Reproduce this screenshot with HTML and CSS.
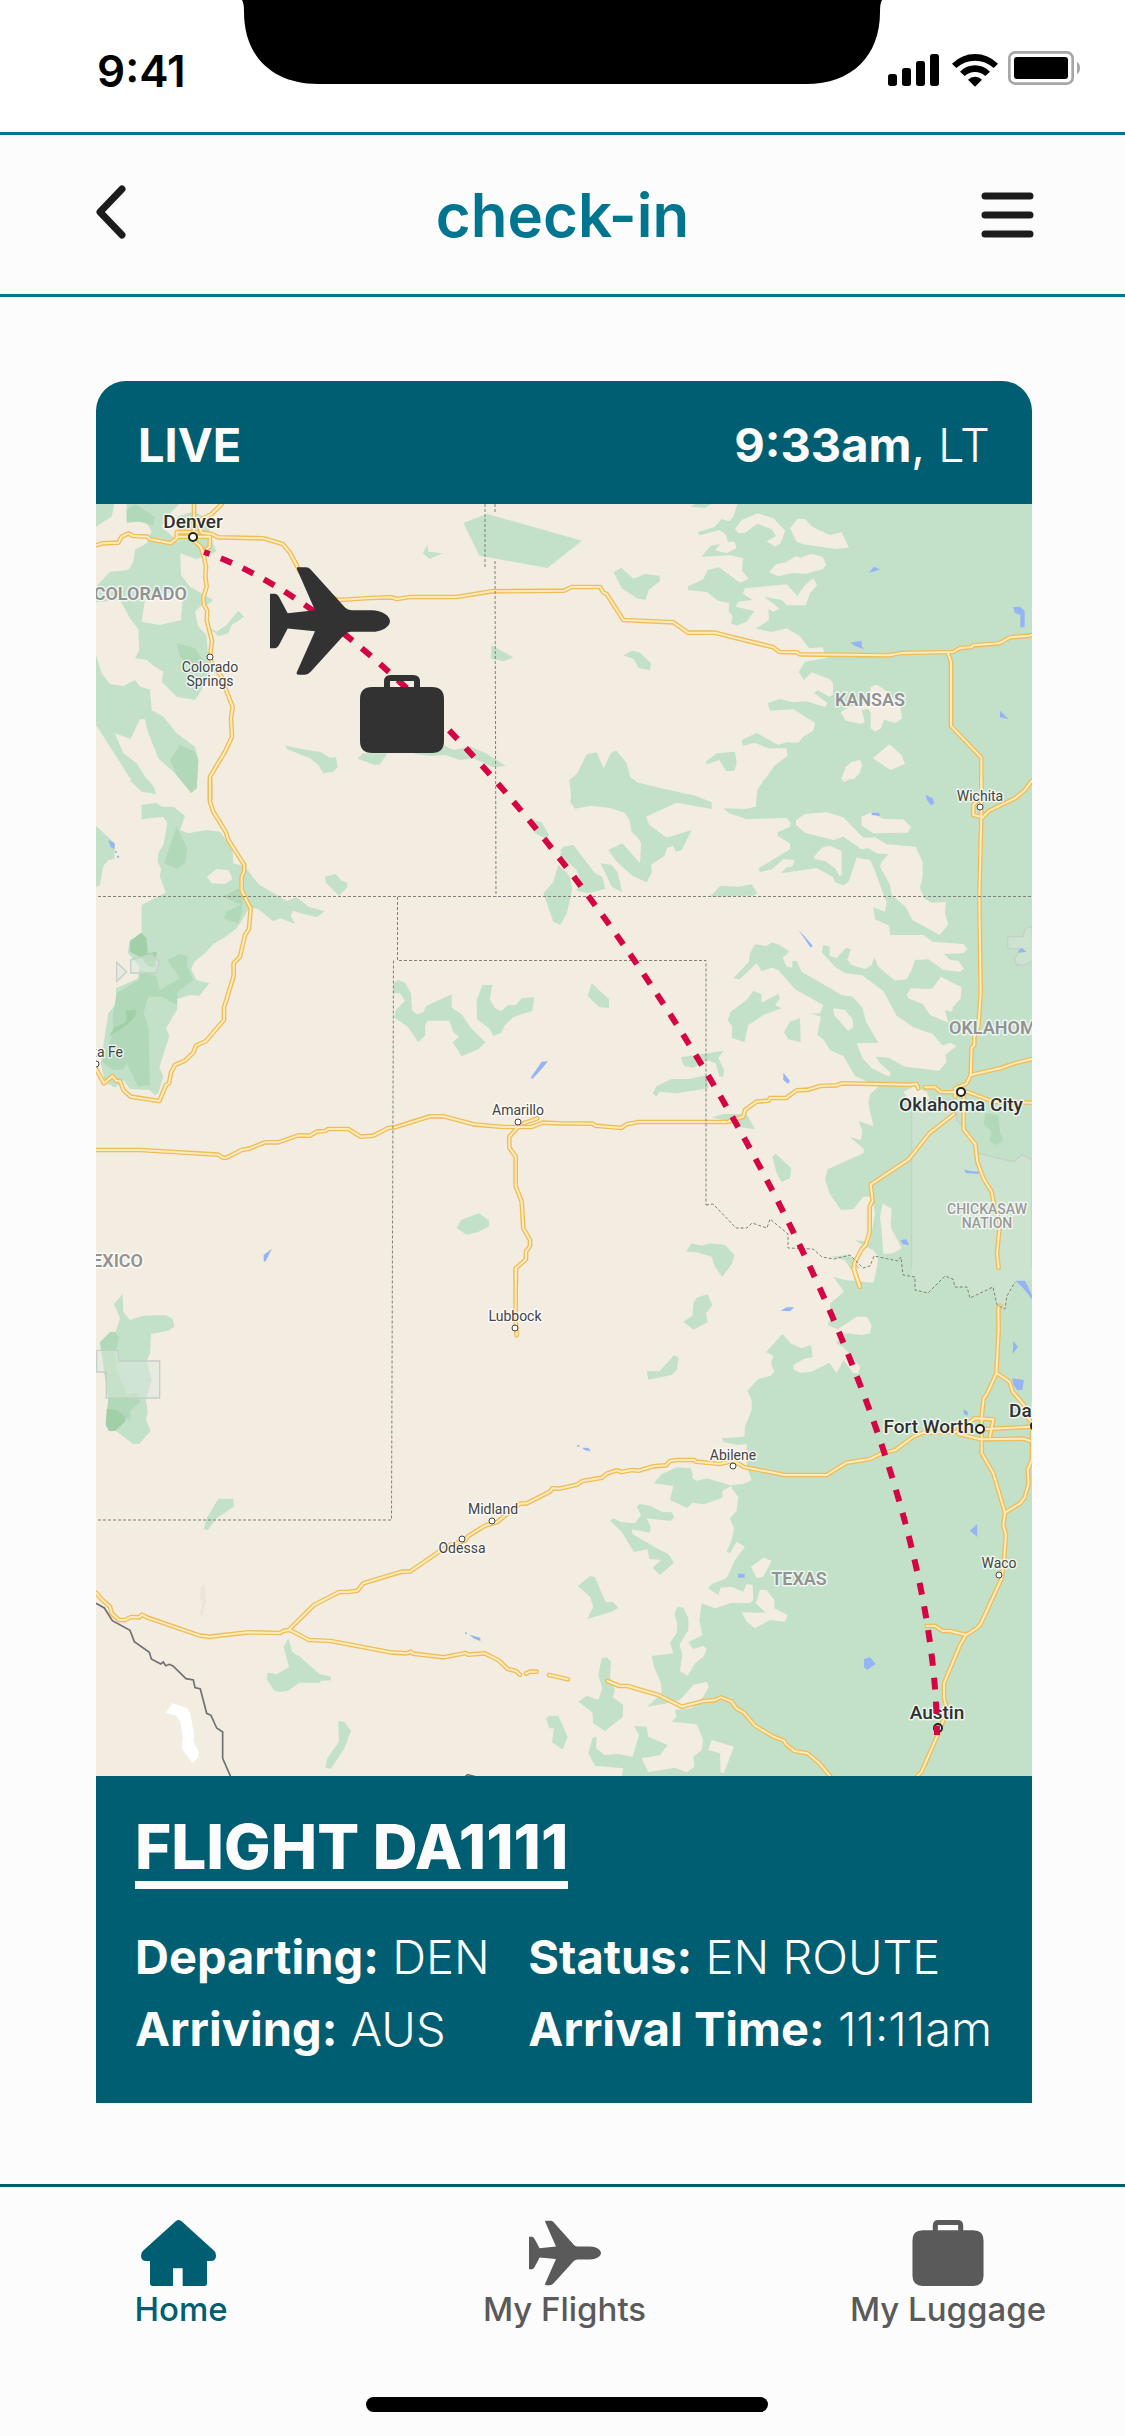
FILE: index.html
```html
<!DOCTYPE html>
<html lang="en">
<head>
<meta charset="utf-8">
<meta name="viewport" content="width=device-width, initial-scale=1">
<title>check-in</title>
<link rel="stylesheet" href="styles.css">
</head>
<body>
<svg class="sprite" aria-hidden="true">
  <symbol id="plane" viewBox="570 591 360 323">
    <path d="M651 591h27q8 0 14 7L795 712q8 8 20 8h60c30 0 55 16 55 33s-25 32-55 32h-62q-11 0-20 9L692 905q-8 9-18 9h-18q-9 0-5-9L705 783 623 775 598 823q-6 11-14 11h-14V671h14q8 0 14 11L623 729 705 720 651 597z"/>
  </symbol>
  <symbol id="suitcase" viewBox="840 915 252 234">
    <path fill-rule="evenodd" d="M876 951H912V935Q912 915 932 915H1000Q1020 915 1020 935V951H1056Q1092 951 1092 987V1113Q1092 1149 1056 1149H876Q840 1149 840 1113V987Q840 951 876 951ZM930 933V951H1002V933Z"/>
  </symbol>
</svg>

<div class="screen">
  <div class="status-bar">
    <span class="clock">9:41</span>
    <svg class="notch" viewBox="0 0 640 84" aria-hidden="true"><path d="M0 0Q2 3 2 12C2 56 30 84 76 84H564C610 84 638 56 638 12Q638 3 640 0Z"/></svg>
    <svg class="indicators" viewBox="54 33 576 108" role="img" aria-label="Signal, Wi-Fi and battery">
      <rect x="54" y="102" width="27" height="36" rx="8"/>
      <rect x="96" y="84" width="27" height="54" rx="8"/>
      <rect x="138" y="63" width="27" height="75" rx="8"/>
      <rect x="180" y="42" width="27" height="96" rx="8"/>
      <path d="M246 71Q276 42 315 42T384 71L371 84Q346 62 315 62T259 84Z"/>
      <path d="M270 95Q290 76 315 76T360 95L346 108Q332 96 315 96T284 108Z"/>
      <path d="M294 119Q303 110 315 110T336 119L315 140Z"/>
      <rect class="battery-case" x="418" y="37" width="190" height="94" rx="18"/>
      <rect x="432" y="51" width="162" height="66" rx="9"/>
      <path class="battery-cap" d="M621 66Q630 71 630 84T621 102Z"/>
    </svg>
  </div>

  <header class="app-bar">
    <button class="icon-button" type="button" aria-label="Back">
      <svg width="36" height="60" viewBox="0 0 36 60"><path class="chevron" d="M31 4 9 27 31 50"/></svg>
    </button>
    <h1 class="app-title">check-in</h1>
    <button class="icon-button icon-button-end" type="button" aria-label="Menu">
      <svg width="53" height="46" viewBox="0 0 53 46"><path class="bars" d="M4 4H49M4 23H49M4 42H49"/></svg>
    </button>
  </header>

  <main class="content">
    <article class="flight-card">
      <div class="live-bar">
        <strong>LIVE</strong>
        <span><strong>9:33am</strong><span class="comma">,</span> LT</span>
      </div>

      <svg class="map" viewBox="96 504 936 1272" role="img" aria-label="Map of the flight from Denver to Austin">
        <defs>
          <g id="roads">
            <g transform="translate(80 370) scale(.33333)">
              <path d="M342 402V490L345 515 362 530 372 560 378 590 376 620 380 650 370 683 372 705 382 722 380 750 396 812 390 862 400 890 425 920 438 960 458 1010 453 1045 456 1100 435 1145 390 1220V1290"/>
              <path d="M425 402 395 432 352 455 365 488 395 492 415 502 550 505 608 522 630 548 660 605 700 660 775 690 870 684 935 682 950 687 990 681 1130 681 1235 664 1452 662 1475 651 1560 651 1570 668 1580 672 1630 750 1780 757 1824 788 1905 788 2080 832 2098 846 2150 847 2160 853 2428 856 2465 849 2620 846 2640 834 2672 832 2680 826 2758 820 2790 802 2850 797 2870 788"/>
              <path d="M48 526 68 520 115 518 125 500 145 490 160 498 203 500 210 508 272 520 290 505 290 487 352 487M290 500H390L389 530 370 545"/>
            </g>
            <g transform="translate(560 370) scale(.33333)">
              <path d="M1163 847 1173 875V1068L1264 1163V1290"/>
            </g>
            <g transform="translate(80 780) scale(.33333)">
              <path d="M390 0V65L400 95 437 155 445 180 493 255 492 275 485 290V330L500 362 512 385 507 447 495 465 480 530 461 550V588L432 683V720L378 783 348 797 340 818 315 842 285 855 273 877 267 910 258 915 238 963 152 950 130 930 120 903 108 902 97 888 72 910 48 866"/>
              <path d="M40 1110H180L415 1124 428 1133 440 1133 485 1110 508 1106 555 1087 595 1087 655 1066 690 1067 710 1055 735 1053 745 1047H805L842 1070 880 1067 925 1044 945 1042 1050 1009 1090 1009 1180 1033 1270 1041 1355 1041 1388 1028 1440 1030 1538 1031 1546 1037 1624 1044 1640 1033 1675 1026H1942L1990 1010 1995 990 2030 965 2065 962 2070 954 2118 954 2150 931 2185 929 2220 918 2270 916 2285 910 2490 914 2510 912 2515 925"/>
              <path d="M1315 1040 1288 1070V1103L1307 1130V1218L1325 1265 1330 1345 1350 1380 1350 1398 1338 1415V1438L1308 1465V1510M1330 1030 1372 1015"/>
            </g>
            <g transform="translate(560 780) scale(.33333)">
              <path d="M1264 -5V110L1258 350 1262 640 1255 740 1243 770V795L1235 803 1232 885 1220 910 1185 925V950M1416 2 1395 30 1365 55 1288 92 1268 112 1240 105 1240 75 1260 55"/>
              <path d="M1095 922 1125 922 1142 936 1190 937M1220 935 1300 965 1416 968M1232 885 1320 865 1370 848 1416 837"/>
              <path d="M1182 1002 1108 1060 1046 1138 932 1214 938 1262 929 1280V1357L917 1395 905 1407 883 1450V1470L900 1520M1211 950V1048L1246 1093 1252 1145 1270 1195 1295 1235 1302 1275 1320 1330 1311 1420 1316 1463"/>
            </g>
            <g transform="translate(80 1270) scale(.33333)">
              <path d="M1307 -5V150L1310 196"/>
              <path d="M628 1078 702 1005 778 966H805L832 962 850 940 965 905H990L1082 842 1110 825 1155 812 1165 798 1215 767 1250 757 1320 701 1340 700 1410 665 1417 655 1437 656 1490 644 1508 633 1566 623 1580 611 1610 601 1625 606 1655 600 1675 602 1720 589 1758 586 1770 573 1790 570H1843L1848 575 1920 582 1960 572 1992 591 2115 615H2240L2300 578 2370 567 2410 548 2445 541 2500 500 2530 488 2630 485"/>
              <path d="M48 968 65 988 90 1010 95 1030 117 1050 135 1050 153 1041 178 1042 186 1034 200 1042 360 1097 390 1100 505 1087 600 1089 612 1082 630 1080 687 1110 752 1113 930 1147 980 1150 992 1145 1000 1151 1092 1162 1157 1149 1165 1154 1214 1150 1255 1170 1283 1197 1308 1203 1320 1214M1338 1211 1350 1205H1370M1407 1215 1463 1228"/>
            </g>
            <g transform="translate(560 1270) scale(.33333)">
              <path d="M880 -5 899 50M142 1233 178 1248H202L295 1275 365 1310 432 1293 463 1291 483 1282 515 1295 530 1316 552 1328 585 1367 640 1400 672 1412 678 1423 703 1443 742 1450 778 1480 812 1520"/>
              <path d="M1321 107 1315 115 1316 180 1309 310 1283 368 1271 385 1265 440V550L1300 610 1335 728 1330 768 1338 793 1332 870 1325 925 1262 1062 1250 1075 1218 1095 1200 1125 1152 1240V1285L1162 1320 1135 1390 1085 1505 1070 1520"/>
              <path d="M1311 310 1348 335 1358 365 1392 405 1400 440 1416 458M1195 478 1245 445 1300 448 1290 500M1195 492 1262 508 1390 506 1416 515M1265 478 1416 470M1416 480V570L1403 600 1406 640 1394 683 1380 700 1335 728M1100 1068H1125L1148 1083 1170 1083 1218 1095"/>
            </g>
          </g>
        </defs>

        <rect class="land" x="96" y="504" width="936" height="1272"/>

        <!-- Colorado -->
        <g transform="translate(80 370) scale(.33333)">
          <path class="park" d="M48 402H298L270 430 245 470 300 520 303 615 330 650 400 690 350 730 380 800 385 870 390 920 345 990 290 980 245 935 210 960 215 1020 250 1040 290 1090 345 1130 355 1170 350 1255 333 1268 285 1210 235 1165 205 1090 195 1048 180 1048 150 1110 170 1180 228 1273 190 1260 150 1225 90 1130 48 1065ZM290 440 340 425 385 445 390 500 410 545 350 568 300 550Z"/>
          <path class="land" d="M103 402H140V460L195 450 215 485 200 520 165 540 160 575 145 600 90 605 48 650V470L95 440ZM48 697 120 690 150 745 175 778 178 840 165 865 200 870 225 890 250 905 245 940 215 960 180 950 165 930 130 948 90 942 65 910 48 855ZM195 690 310 655 303 750 240 765 185 755ZM345 725 370 700 375 790 355 770ZM105 1090 160 1110 170 1180 130 1150Z"/>
          <path class="forest" d="M140 420 165 402 225 440 220 467 180 455 140 455ZM290 820 345 835 370 870 340 900 300 860ZM270 1170 300 1125 345 1145 355 1170 350 1255 333 1268 290 1215Z"/>
          <path class="park" d="M385 770 410 785 440 765 475 722 492 740 455 765 445 790 415 798ZM1042 525 1028 550 1050 567 1088 550 1045 545ZM1150 458 1222 432 1506 512 1402 594 1198 557ZM1235 826 1300 862 1272 874 1233 866ZM617 1127 680 1140 720 1145 750 1163 768 1162 773 1192 760 1205 730 1210 715 1185 690 1165 620 1137ZM832 1166 850 1150 922 1150 900 1183 885 1185ZM1000 1151 1090 1125 1120 1140 1170 1130 1215 1148 1277 1187 1240 1192 1180 1165 1140 1170 1095 1155 1050 1158Z"/>
        </g>

        <!-- Kansas -->
        <g transform="translate(560 370) scale(.33333)">
          <path class="park" d="M532 402H1417V1292H590L592 1260 645 1185 683 1157 680 1135 625 1135 585 1118 548 1127 545 1110 590 1089 655 1125 680 1117 715 1118 730 1100 760 1082 765 1058 700 1018 630 1022 623 1000 660 987 700 997 740 994 795 1011 803 1000 762 968 772 961 808 980 819 975 819 940 810 928 755 907 732 930 716 907 735 875 800 864 787 832 748 835 718 797 680 775 635 786 588 776 627 750 625 716 640 726 658 715 612 680 665 690 680 706 737 706 750 670 771 645 760 625 735 645 712 678 680 643 555 655 548 670 577 690 535 695 527 710 583 723 560 755 530 767 513 760 518 738 506 725 508 700 475 692 440 666 385 660 383 650 430 627 443 600 477 592 540 638 566 626 546 602 549 565 510 556 424 560 452 527 480 522 465 541 500 550 529 535 524 515 504 515 497 493 478 480 420 496 412 487 463 471 485 447 507 454 520 440Z"/>
          <path class="land" d="M525 478 545 450 593 430 640 445 676 482 662 520 645 530 620 514 648 498 635 478 592 461 555 488 535 490ZM690 475 712 446 735 447 757 470 810 496 845 487 867 533 828 537 730 523 710 515ZM627 607 648 583 678 577 707 558 722 563 753 551 788 560 799 585 787 598 738 611 695 609 655 619ZM932 950 950 944 985 967 1020 1010 1027 1045 1005 1059 972 1049 963 1075 945 1085 932 1075V1030L925 1017 905 1020 914 1055 903 1062 858 1052 842 1027 870 1010 930 1000ZM938 1165 988 1123 1025 1155 1035 1182 992 1200ZM842 1230 858 1190 875 1175 900 1170 907 1185 898 1210 882 1227 848 1236Z"/>
          <path class="park" d="M392 410 405 402H455L435 414ZM161 607 184 593 220 626 255 612 298 617 301 632 266 660 257 689 233 686 185 655ZM190 856 216 842 240 848 273 880 270 901 235 893 222 868ZM437 1175 470 1150 525 1145 530 1180 523 1202 498 1203 478 1170 440 1183ZM28 1230 52 1210 80 1153 110 1147 131 1195 152 1150 168 1141 200 1180 211 1222 230 1237 300 1255 405 1277 440 1292H35Z"/>
          <path class="water" d="M926 608 942 590 960 598 945 604ZM1360 712 1380 710 1394 722V772H1381V735L1364 728ZM871 818 905 812V828L912 838 885 828ZM1320 1022 1346 1048 1320 1042ZM1097 1274 1120 1290H1105Z"/>
        </g>

        <!-- Northern New Mexico and the Panhandle -->
        <g transform="translate(80 780) scale(.33333)">
          <path class="park" d="M185 75 230 68 245 80 280 80 315 107 300 150 325 160 380 150 420 155 445 190 458 215 460 250 495 260 535 312 620 363 650 352 685 380 735 394 710 411 670 402 638 392 632 408 645 431 600 415 580 424 535 388 510 380 480 430 470 445 435 472 400 492 375 520 343 545 333 568 350 600 388 610 358 648 330 645 292 657 292 688 258 745 268 768 238 862 250 890 235 940 225 946 208 930 150 927 130 900 105 923 75 905 62 850 85 700 108 672V625L175 595 178 560 143 518 150 480 185 460V375L257 338 240 290 243 265 233 245 235 220 250 195 262 130 250 110 185 118ZM48 138 105 190 103 237 85 240 70 258 60 315 48 322ZM148 0H205L222 22 228 42 185 35Z"/>
          <path class="land" d="M380 290 410 267 445 270 458 298 435 312 395 310Z"/>
          <path class="forest" d="M305 0H350V22L335 38ZM290 140 322 205 315 250 290 268 253 250 275 180ZM430 350 475 325 490 345 485 400 475 430 430 415 440 395 485 375ZM262 540 300 522 322 528V560L340 600 292 635 290 675 245 650 205 650 190 700 205 740 210 915 175 920 140 850 130 868 100 870 65 845 100 760 98 710 110 640 175 600 180 570 230 590 240 630 300 595Z"/>
          <path class="forest-deep" d="M150 485 183 458 200 475 203 520 230 515 225 560 205 558 185 535 150 515ZM88 770 100 745 140 725 138 690 170 690 165 710 140 735Z"/>
          <path class="reserve" d="M110 547 140 575 110 604ZM152 540 215 522 238 545 228 579H152Z"/>
          <path class="park" d="M735 290 767 282 785 302 802 308V322L777 347 738 308ZM940 610 955 600 975 608 993 640 996 690 1010 703 1030 697 1038 678 1115 643V683L1145 703 1172 743 1216 787 1195 808 1145 829 1118 787 1137 770 1120 757 1108 722 1043 722 1035 738 1036 766 1015 787 983 740 942 712 948 690 975 663 960 640 940 640ZM1190 660 1207 615H1237L1229 658 1245 685 1263 694 1283 676 1308 675 1326 654 1363 652 1357 692 1300 711 1275 735 1263 759 1240 768 1227 745 1191 718ZM1130 1345 1143 1320 1197 1300 1227 1322 1228 1338 1195 1356 1160 1364ZM1353 120 1385 127 1407 165 1400 178 1365 160ZM1440 213 1450 200 1480 196 1500 235ZM1435 255 1470 290 1476 330 1460 400 1440 435 1420 425 1390 340 1420 305Z"/>
          <path class="water" d="M85 180 104 190 103 208 92 200ZM105 213H110V219H105ZM111 227H117V233H111ZM1352 893 1385 845 1404 844 1385 867 1358 896ZM551 1425 576 1406 556 1445 551 1443Z"/>
        </g>

        <!-- Oklahoma -->
        <g transform="translate(560 780) scale(.33333)">
          <path class="park" d="M28 -2H220L230 7 300 25 405 47 455 67V87L350 68 258 110 268 135 320 173 395 150 365 210 348 215 340 198 322 203 313 228 273 255 276 275 260 307 218 288 170 245 145 210 187 190 240 250 243 190 235 175 215 155 208 120 193 98 150 84 92 77 45 86 30 65 37 30ZM0 225 12 200 40 195 105 280 127 290 136 327 85 340 50 332 62 300 50 270ZM0 270 20 275 36 325 20 400 0 435ZM122 250 155 255 172 275 187 337 155 320Z"/>
          <path class="park" d="M612 -2 592 35 587 80 555 87 490 85 508 100 560 118 680 113 692 130 690 140 653 157V168L690 190V208L595 265 600 276 635 268 670 238 703 240 697 260 680 262 662 280 770 264 818 290 825 307 850 316 866 305 890 233 930 240 940 260 980 368 975 395 940 382 945 418 988 437 990 465H1090L1118 485 1210 492 1222 507 1210 520 1152 522 1170 540 1195 542 1212 567 1200 575 1150 570 1105 538 1065 540 1055 570 1040 598 1005 602 955 560 943 532 935 555 915 567 875 555 862 540 872 508 858 503 830 535 808 527 810 500 790 495 785 517 825 560 855 580 905 585 970 633 1010 707 1060 742 1118 762 1148 797 1170 788 1190 798 1155 825 1160 845 1138 872 1035 860 985 833 947 830 960 850 992 878 988 890 935 865 908 835 890 790 955 788 918 725 908 685 878 650 845 645 725 575 710 543H697V563L680 560 668 533 688 515 660 495 635 487 620 498 585 493 570 520 567 545 520 595 540 597 590 550 605 573 635 563 655 570 705 628 790 675 780 700H750L783 710 772 765 790 778 810 810 850 828 885 888 955 920 930 943 925 970 940 1038 895 1023 907 1050 903 1080 870 1072 912 1107 910 1120 803 1168 795 1200 810 1243 843 1290 880 1287 910 1250 935 1250 945 1300 930 1385 885 1380 915 1400 940 1410 955 1430 945 1502H1417V-2Z"/>
          <path class="land" d="M845 -2 852 6 870 -2ZM708 120 735 102 800 97 850 112 910 173 945 172 980 193 1030 197 1067 200 1088 245V290L1080 325 1095 358 1115 368 1157 365 1155 402 1165 433 1140 465 1057 420 1038 382 995 345 990 315 960 260 965 245 985 223 950 220 925 205 905 208 850 170 820 180 735 158 708 135ZM762 230 785 203 810 197 845 213V285L838 288 825 265 795 243 765 238ZM905 110 935 97 970 117 1030 118 1053 140 1043 158 940 160 905 137ZM1040 645 1052 625 1105 627 1118 625 1142 590 1205 622 1202 655 1180 680 1175 695 1155 690 1165 728 1110 705 1088 672 1045 655ZM820 685 855 690 878 718 880 742 865 753 822 705ZM968 1270 995 1287 992 1340 1025 1405 1000 1420 970 1422 965 1350 960 1310ZM1030 935 1060 920 1100 935 1110 960 1050 965Z"/>
          <path class="park" d="M580 632 604 643 605 668 655 642 660 655 645 675 665 685 610 705 565 735 553 787 515 773 517 740 503 720 512 695 560 660ZM672 757 690 725 720 714 722 787 685 778ZM637 1130 648 1122 694 1165 690 1195 665 1206 650 1180ZM95 610 147 658V683L118 682 83 648ZM362 832 490 812 475 835 492 870 490 890H478L467 850 440 840 400 863 372 858ZM278 940 290 918 335 897H385L440 885 445 925 350 940 298 935 290 950ZM455 1012 490 1002H560L585 1048 530 1040 510 1025ZM378 1415 395 1390 425 1397 450 1390 495 1395 523 1425 515 1453 487 1490 465 1460 455 1430 410 1417ZM450 350 480 318 535 320 575 313 592 340 580 347ZM812 1430 870 1425 900 1465 870 1465 855 1440Z"/>
          <path class="nation" d="M1055 960H1185L1190 1020 1215 1045 1255 1120 1362 1145 1385 1125 1416 1138V1502L1200 1530 1055 1490ZM1416 440 1397 445 1388 470H1343V505L1385 508 1363 535 1370 555 1400 553 1420 540Z"/>
          <path class="forest" d="M1275 1000 1315 1005 1320 1060 1330 1080 1310 1095 1290 1085 1293 1050 1272 1035Z"/>
          <path class="water" d="M1097 44 1118 55 1123 70 1112 76 1101 60ZM935 98H957L960 108 935 105ZM715 450 735 470 758 497 752 503 733 475ZM1375 512 1386 503 1399 516 1376 518ZM670 878 690 903 684 911 670 900ZM1212 1168 1230 1173 1257 1175 1255 1182 1218 1179ZM1022 1380 1040 1378 1047 1396 1028 1392Z"/>
        </g>

        <!-- West Texas -->
        <g transform="translate(80 1270) scale(.33333)">
          <path class="park" d="M102 102 128 72 130 125 150 150 190 137 258 135 278 147 283 170 265 182 213 192 210 250 200 272 215 330 198 390 203 425 198 450 212 482 177 522H160L108 483H85L77 460 85 385 60 217 90 187 107 185 120 145Z"/>
          <path class="forest" d="M60 217 90 187 105 185 118 203 105 250 110 310 135 350 140 375 170 368 180 397 152 420 150 455 137 440 82 420 85 385Z"/>
          <path class="forest-deep" d="M80 417 110 420 137 440 135 455 105 483H88L77 465Z"/>
          <path class="reserve" d="M50 241H113L117 273H239V384H79V306H50Z"/>
          <path class="park" d="M415 686 460 687 461 710 410 745 383 781 371 777 380 745ZM625 1105 637 1147 660 1160 718 1212 753 1220V1231L723 1232 718 1239 657 1238 625 1262 600 1266 583 1262 560 1228 563 1208 590 1213 627 1192 611 1130ZM775 1354 793 1355 813 1382 792 1438 752 1496 736 1493 742 1465 777 1415ZM1398 1345 1408 1337 1435 1338 1463 1402 1447 1438 1416 1417 1422 1375H1408Z"/>
          <path class="salt" d="M277 1299 322 1315 330 1328 342 1390 340 1413 357 1447 354 1463 337 1479 305 1435 308 1400 301 1355 288 1337 258 1328Z"/>
          <path class="shade" d="M362 950 374 945 378 990 366 1045 360 1030 368 995 360 990Z"/>
          <path class="water" d="M1155 1087H1160V1092H1155ZM1168 1094 1201 1103V1113L1182 1106Z"/>
          <path class="river" d="M48 1000 73 1014 97 1052 150 1081 163 1115 208 1147 214 1167 242 1182 250 1176 257 1187 268 1183 279 1188 318 1226 340 1230 345 1253 361 1257 380 1330 393 1336 410 1374 428 1386V1465L452 1520M1155 1520 1163 1514 1185 1520"/>
        </g>

        <!-- East Texas -->
        <g transform="translate(560 1270) scale(.33333)">
          <path class="park" d="M950 -2 940 38 855 30 820 20 852 65 810 100 812 145 803 165 833 178 890 140 920 140 935 165 930 190 905 195 860 190 828 218 850 232 880 265 900 290 895 310H880L850 270 830 310 808 278 755 305 720 308 700 298V285L735 265 758 262 753 225 725 235 692 220 667 192 618 247 640 257 633 280 643 305 632 317 595 327 562 362 575 390V420L555 470 553 500 485 505 490 515 530 525 560 522V590L575 630 550 642 515 645V655L535 682 530 722 510 745 522 775 515 810 500 845 510 850 530 815 555 830 525 870 500 925 455 942 445 955 475 975 482 953 515 950 550 965 560 942 578 945 580 990 570 1000 515 998 465 1015 425 1000 418 1050 427 1095 385 1117 400 1138 430 1127 440 1137 430 1160 405 1180 383 1217 360 1203 367 1153 358 1125 385 1080V1045L370 1013 352 1010 343 1033 352 1060 350 1090 330 1118 340 1150 275 1158 282 1190 303 1240 305 1270 262 1310 320 1300 360 1290 400 1245 440 1235 447 1250 430 1280 395 1315 345 1320 350 1340 335 1355 410 1363 430 1410 425 1440 400 1460 403 1490 380 1507 345 1493 265 1507 245 1465 300 1455 323 1425 265 1400 260 1370 222 1368 237 1395 218 1460 175 1452 135 1455 108 1435 110 1400 98 1403 85 1450 105 1487 190 1495 185 1520H1417V-2Z"/>
          <path class="land" d="M573 890 610 863 635 872 610 920 590 925ZM600 960H620L643 990V1015L683 1035 675 1055 630 1050 585 1075 560 1055 545 1027 617 1028 587 1000ZM445 1440 455 1410 522 1430 492 1508H482L480 1450Z"/>
          <path class="park" d="M472 -2 485 18 500 -2ZM400 100 412 82 443 73 457 105 438 130 443 157 400 179 370 155 397 137ZM260 303 298 304 343 255 356 265 350 300 335 315 265 329ZM282 640 305 612 350 592 392 595 398 612 397 625 410 632 440 625 515 647 487 663V683L432 703 397 698 382 714 330 690 340 648ZM150 752 160 745 185 757 225 760 243 735 230 710 240 702 272 708 305 725 335 727 343 740 332 753 260 745 272 770 270 788 215 778 218 792 290 835 325 852 342 878 300 915 278 893 303 870 268 867 262 838 222 846 185 785ZM53 948 90 918 105 922 137 997 158 995 175 1013 155 1025 82 1047 100 1010 90 980ZM125 1165 140 1162 153 1175 150 1220 165 1260 158 1282 190 1305 187 1342 135 1383 100 1360 97 1327 55 1295 80 1277 115 1290 127 1255 115 1215ZM0 1350 22 1400 8 1438 0 1435Z"/>
          <path class="nation-fill" d="M1055 -10V15L1065 20V60L1105 68 1155 17 1180 27 1185 50 1220 50 1230 82 1250 80 1300 50 1310 105 1335 118 1365 35 1416 30V-10Z"/>
          <path class="water" d="M1366 32 1395 32 1416 75V88L1390 55ZM662 122 680 112 703 112 690 124ZM52 525H58V530H52ZM66 533 85 534 93 544 75 541ZM1360 213 1374 230 1358 252ZM1357 325 1392 330 1387 360 1372 360 1360 345ZM1211 418 1224 425 1222 437 1211 432ZM1230 782 1252 762V801ZM534 911H554V923H534ZM912 1167 930 1162 947 1182 922 1200 912 1192Z"/>
        </g>

        <use class="road-edge" href="#roads"/>
        <use class="road" href="#roads"/>

        <path class="border" d="M485 504V567M495 504V514M495 561 496 897M98 896.5H1032M397.500 897V960.500H706V1205M393.500 960.500 391.500 1520H96"/>
        <path class="border" d="M706 1205 713 1204 736 1228 747 1228 752 1223 767 1228 770 1219 788 1234V1248L813 1249 822 1257 834 1259 850 1255 863 1268 870 1266 874 1256 898 1261 901 1257 903 1275 915 1277V1290L928 1293 945 1276 953 1279 955 1287 967 1287 970 1298 993 1287 997 1305 1005 1309 1007 1296 1015 1282"/>

        <g class="places">
          <g class="towns">
            <circle cx="210" cy="657" r="3"/><circle cx="980" cy="807" r="3"/><circle cx="96" cy="1064" r="3"/><circle cx="518" cy="1122" r="3"/><circle cx="515" cy="1328" r="3"/><circle cx="492" cy="1521" r="3"/><circle cx="462" cy="1539" r="3"/><circle cx="733" cy="1466" r="3"/><circle cx="999" cy="1575" r="3"/>
          </g>
          <g class="cities">
            <circle cx="193" cy="537" r="4"/><circle cx="961" cy="1092" r="4"/><circle cx="980" cy="1429" r="4"/><circle cx="1035" cy="1426" r="4"/><circle cx="938" cy="1728" r="4"/>
          </g>
          <g class="town-labels">
            <text x="210" y="672">Colorado</text><text x="210" y="686">Springs</text>
            <text x="980" y="801">Wichita</text>
            <text class="to-left" x="123" y="1057">Santa Fe</text>
            <text x="518" y="1115">Amarillo</text>
            <text x="515" y="1321">Lubbock</text>
            <text x="493" y="1514">Midland</text>
            <text x="462" y="1553">Odessa</text>
            <text x="733" y="1460">Abilene</text>
            <text x="999" y="1568">Waco</text>
          </g>
          <g class="city-labels">
            <text x="193" y="528">Denver</text>
            <text x="961" y="1111">Oklahoma City</text>
            <text class="to-left" x="974" y="1433">Fort Worth</text>
            <text class="to-right" x="1009" y="1417">Dallas</text>
            <text x="937" y="1719">Austin</text>
          </g>
          <g class="state-labels">
            <text class="to-left" x="187" y="600">COLORADO</text>
            <text x="870" y="706">KANSAS</text>
            <text class="to-left" x="143" y="1267">NEW MEXICO</text>
            <text class="to-right" x="949" y="1034">OKLAHOMA</text>
            <text x="799" y="1585">TEXAS</text>
          </g>
          <g class="nation-labels">
            <text x="987" y="1214">CHICKASAW</text><text x="987" y="1228">NATION</text>
          </g>
        </g>

        <path class="route" d="M204 552C488 648 935 1320 937 1735"/>
        <use class="marker" href="#plane" x="270" y="567" width="120" height="108"/>
        <use class="marker" href="#suitcase" x="360" y="675" width="84" height="78"/>
      </svg>

      <div class="details">
        <h2 class="flight-number"><a href="#flight">FLIGHT DA1111</a></h2>
        <dl class="facts">
          <div><dt>Departing:</dt> <dd>DEN</dd></div>
          <div><dt>Status:</dt> <dd>EN ROUTE</dd></div>
          <div><dt>Arriving:</dt> <dd>AUS</dd></div>
          <div><dt>Arrival Time:</dt> <dd>11:11am</dd></div>
        </dl>
      </div>
    </article>
  </main>

  <nav class="tab-bar" aria-label="Main">
    <a class="tab tab-current" href="#home" aria-current="page">
      <svg width="81" height="66" viewBox="63 60 243 198" aria-hidden="true"><path d="M168 63Q176 57 184 63L283 153Q288 158 288 167 288 183 272 183H261V250Q261 258 253 258H188V205H159V258H98Q90 258 90 250V183H78Q63 182 63 167 63 158 69 152Z"/></svg>
      Home
    </a>
    <a class="tab" href="#flights">
      <svg width="72" height="66" aria-hidden="true"><use href="#plane"/></svg>
      My Flights
    </a>
    <a class="tab" href="#luggage">
      <svg width="72" height="66" aria-hidden="true"><use href="#suitcase"/></svg>
      My Luggage
    </a>
  </nav>
  <div class="home-indicator"></div>
</div>
</body>
</html>
```
FILE: styles.css
```css
* {
  box-sizing: border-box;
}

body {
  margin: 0;
  background: #fcfcfc;
  font-family: Inter, "Liberation Sans", sans-serif;
}

.sprite {
  display: none;
}

.screen {
  display: flex;
  flex-direction: column;
  min-height: 100vh;
}

.status-bar {
  display: grid;
  grid-template-columns: 1fr auto 1fr;
  align-items: start;
  height: 132px;
  padding: 0 45px 0 43px;
  background: #fff;
}

.clock {
  padding: 44px 0 0 54px;
  font-size: 44px;
  font-weight: 600;
  line-height: 54px;
}

.notch {
  width: 640px;
  height: 84px;
}

.indicators {
  justify-self: end;
  width: 192px;
  height: 36px;
  margin-top: 51px;
}

.battery-case {
  fill: none;
  stroke: #a6a6a6;
  stroke-width: 8;
}

.battery-cap {
  fill: #a6a6a6;
}

.app-bar {
  display: grid;
  grid-template-columns: 1fr auto 1fr;
  align-items: center;
  height: 165px;
  padding: 0 91px;
  border-top: 3px solid #00758f;
  border-bottom: 3px solid #00758f;
}

.app-title {
  margin: 0;
  color: #00758f;
  font-size: 60px;
  font-weight: 600;
  line-height: 76px;
}

.icon-button {
  display: flex;
  justify-self: start;
  padding: 0;
  border: 0;
  background: none;
}

.icon-button-end {
  justify-self: end;
}

.chevron,
.bars {
  fill: none;
  stroke: #1c1c1c;
  stroke-width: 7;
  stroke-linecap: round;
  stroke-linejoin: round;
}

.content {
  flex: 1;
  padding: 84px 93px 81px 96px;
}

.flight-card {
  overflow: hidden;
  border-radius: 30px 30px 0 0;
  background: #005e72;
  color: #fcfcfc;
}

.live-bar {
  display: flex;
  align-items: center;
  justify-content: space-between;
  height: 123px;
  padding: 4px 42px 0;
  font-size: 47px;
  font-weight: 300;
  line-height: 60px;
}

strong,
.facts dt {
  font-weight: 700;
}

.comma {
  font-weight: 400;
}

.map {
  display: block;
  width: 100%;
}

.land { fill: #f3ece0; }
.park { fill: #c3e1c9; }
.forest { fill: #b1d8b8; }
.forest-deep { fill: #a1d0a8; }
.water { fill: #94b4f6; }
.salt { fill: #fff; }
.shade { fill: #ebe5d9; }
.nation-fill { fill: #cce3cf; }

.nation {
  fill: #cce3cf;
  stroke: #c4d0c8;
  stroke-width: 4;
}

.reserve {
  fill: #dbe7dc;
  fill-opacity: 0.5;
  stroke: #c4d0c8;
  stroke-width: 4;
}

.river {
  fill: none;
  stroke: #707272;
  stroke-width: 5;
}

.road-edge,
.road {
  fill: none;
  stroke-linecap: round;
  stroke-linejoin: round;
}

.road-edge {
  stroke: #eebd58;
  stroke-width: 14;
}

.road {
  stroke: #fdebbd;
  stroke-width: 6;
}

.border {
  fill: none;
  stroke: #7f807b;
  stroke-width: 1;
  stroke-dasharray: 3 2;
}

.towns,
.cities {
  fill: #fff;
  stroke: #444;
  stroke-width: 1;
}

.cities {
  stroke: #222;
  stroke-width: 2;
}

.places text {
  font-family: Roboto, "Liberation Sans", sans-serif;
  text-anchor: middle;
  paint-order: stroke;
  stroke: #fff;
  stroke-opacity: 0.7;
  stroke-width: 3;
  stroke-linejoin: round;
}

.places .to-left { text-anchor: end; }
.places .to-right { text-anchor: start; }

.town-labels {
  fill: #444;
  font-size: 14px;
}

.city-labels {
  fill: #303030;
  font-size: 19px;
  font-weight: 500;
}

.state-labels {
  fill: #929292;
  font-size: 18px;
  font-weight: 600;
}

.nation-labels {
  fill: #9a9a9a;
  font-size: 14px;
  font-weight: 500;
}

.route {
  fill: none;
  stroke: #d40445;
  stroke-width: 6;
  stroke-dasharray: 12 12;
  stroke-dashoffset: 6;
}

.marker {
  fill: #323232;
}

.details {
  padding: 37px 40px 38px 39px;
}

.flight-number {
  margin: 0 0 32px;
  font-size: 62px;
  font-weight: 800;
  line-height: 68px;
}

.flight-number a {
  display: inline-block;
  border-bottom: 8px solid #fcfcfc;
  color: inherit;
  text-decoration: none;
}

.facts {
  display: grid;
  grid-template-columns: auto auto;
  justify-content: space-between;
  margin: 0;
  font-size: 47px;
  font-weight: 300;
  line-height: 72px;
  white-space: nowrap;
}

.facts dt,
.facts dd {
  display: inline;
  margin: 0;
}

.tab-bar {
  display: grid;
  grid-template-columns: repeat(3, 206px);
  justify-content: space-between;
  padding: 33px 74px 65px 78px;
  border-top: 3px solid #005e72;
}

.tab {
  display: flex;
  flex-direction: column;
  align-items: center;
  gap: 1px;
  color: #5a5a5a;
  fill: currentColor;
  font-size: 33px;
  font-weight: 500;
  line-height: 45px;
  text-decoration: none;
  white-space: nowrap;
}

.tab-current {
  color: #005e72;
}

.home-indicator {
  align-self: center;
  width: 402px;
  height: 15px;
  margin: 0 0 24px 9px;
  border-radius: 8px;
  background: #000;
}
```
